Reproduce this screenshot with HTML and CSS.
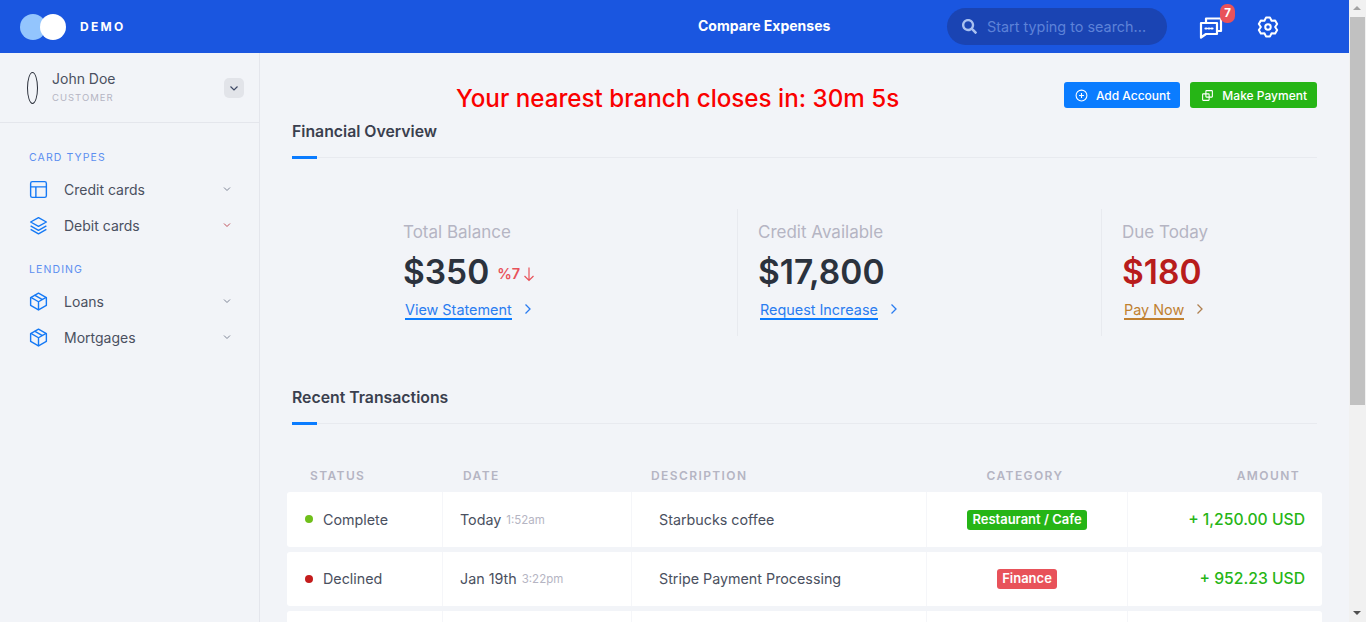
FILE: index.html
```html
<!DOCTYPE html>
<html>
<head>
  <meta charset="UTF-8">
  <meta name="viewport" content="width=device-width,initial-scale=1.0">
  <title>Compare Expenses</title>
  <link rel="stylesheet" href="styles.css">
</head>
<body>
  <header class="topbar">
    <div class="brand">
      <span class="brand-dot brand-dot-light"></span>
      <span class="brand-dot brand-dot-white"></span>
      <span class="brand-name">DEMO</span>
    </div>
    <div class="topbar-title">Compare Expenses</div>
    <div class="search">
      <svg class="search-icon" viewBox="0 0 512 512"><path fill="currentColor" d="M505 442.700 405.300 343c-4.500-4.500-10.600-7-17-7H372c27.600-35.300 44-79.700 44-128C416 93.100 322.900 0 208 0S0 93.100 0 208s93.100 208 208 208c48.300 0 92.700-16.400 128-44v16.300c0 6.400 2.500 12.500 7 17l99.700 99.700c9.400 9.400 24.600 9.400 33.900 0l28.300-28.300c9.400-9.400 9.400-24.600.1-34zM208 336c-70.700 0-128-57.200-128-128 0-70.700 57.200-128 128-128 70.700 0 128 57.200 128 128 0 70.700-57.200 128-128 128z"/></svg>
      <span class="search-text">Start typing to search...</span>
    </div>
    <div class="chat">
      <svg viewBox="0 0 24 24" fill="none" stroke="currentColor" stroke-width="2.200" stroke-linejoin="round"><path d="M7 7V3.500h15V16h-3"/><path d="M2 8h16v11H7l-5 3.500z"/><path d="M6.500 13.500h1M9.500 13.500h1M12.500 13.500h1" stroke-linecap="round"/></svg>
      <span class="chat-badge">7</span>
    </div>
    <svg class="gear" viewBox="0 0 24 24" fill="none" stroke="currentColor" stroke-width="2.200" stroke-linejoin="round"><circle cx="12" cy="12" r="3"/><path d="M9.820 1.730H14.180L15.900 5.250 19.800 4.970 21.990 8.760 19.800 12 21.990 15.240 19.800 19.030 15.900 18.750 14.180 22.270H9.820L8.100 18.750 4.200 19.030 2.010 15.240 4.200 12 2.010 8.760 4.200 4.970 8.100 5.250z"/></svg>
  </header>

  <div class="layout">
    <aside class="sidebar">
      <div class="user">
        <span class="avatar"></span>
        <div class="user-info">
          <div class="user-name">John Doe</div>
          <div class="user-role">CUSTOMER</div>
        </div>
        <span class="user-toggle"><svg viewBox="0 0 12 12"><path d="M2.500 4.500 6 8l3.500-3.500"/></svg></span>
      </div>

      <div class="nav-label">CARD TYPES</div>
      <a class="nav-item">
        <svg class="nav-icon" viewBox="0 0 24 24"><rect x="3" y="3" width="18" height="18" rx="2"/><path d="M3 9h18M9 21V9"/></svg>
        <span class="nav-text">Credit cards</span>
        <svg class="nav-arrow" viewBox="0 0 12 12"><path d="M3 4.500 6 7.500l3-3"/></svg>
      </a>
      <a class="nav-item">
        <svg class="nav-icon" viewBox="0 0 24 24"><path d="M12 3 3 8l9 5 9-5z"/><path d="m3 12.500 9 5 9-5"/><path d="m3 16.500 9 5 9-5"/></svg>
        <span class="nav-text">Debit cards</span>
        <svg class="nav-arrow nav-arrow-red" viewBox="0 0 12 12"><path d="M3 4.500 6 7.500l3-3"/></svg>
      </a>

      <div class="nav-label nav-label-next">LENDING</div>
      <a class="nav-item">
        <svg class="nav-icon" viewBox="0 0 24 24"><path d="M21 16.500V7.500L12 2.500 3 7.500v9l9 5z"/><path d="M3.300 7.300 12 12.300l8.700-5M12 22V12.300M7.500 4.800l9 5.100"/></svg>
        <span class="nav-text">Loans</span>
        <svg class="nav-arrow" viewBox="0 0 12 12"><path d="M3 4.500 6 7.500l3-3"/></svg>
      </a>
      <a class="nav-item">
        <svg class="nav-icon" viewBox="0 0 24 24"><path d="M21 16.500V7.500L12 2.500 3 7.500v9l9 5z"/><path d="M3.300 7.300 12 12.300l8.700-5M12 22V12.300M7.500 4.800l9 5.100"/></svg>
        <span class="nav-text">Mortgages</span>
        <svg class="nav-arrow" viewBox="0 0 12 12"><path d="M3 4.500 6 7.500l3-3"/></svg>
      </a>
    </aside>

    <main class="content">
      <div class="top-row">
        <div class="branch-notice">Your nearest branch closes in: 30m 5s</div>
        <div class="top-actions">
          <a class="btn btn-blue">
            <svg viewBox="0 0 24 24"><circle cx="12" cy="12" r="10"/><path d="M12 7.500v9M7.500 12h9"/></svg>
            Add Account
          </a>
          <a class="btn btn-green">
            <svg viewBox="0 0 24 24"><rect x="9" y="3" width="12" height="12" rx="1"/><rect x="3" y="9" width="12" height="12" rx="1"/></svg>
            Make Payment
          </a>
        </div>
      </div>

      <div class="section-head section-head-first"><h2>Financial Overview</h2></div>

      <div class="stats">
        <div class="stat stat-first">
          <div class="stat-label">Total Balance</div>
          <div class="stat-value">$350<span class="stat-change">%7<svg viewBox="0 0 12 16"><path d="M6 1.500v13M1.500 10 6 14.500 10.500 10"/></svg></span></div>
          <a class="stat-link">View Statement</a><svg class="stat-arrow" viewBox="0 0 10 12"><path d="M2.500 1.500 7 6l-4.500 4.500"/></svg>
        </div>
        <div class="stat">
          <div class="stat-label">Credit Available</div>
          <div class="stat-value">$17,800</div>
          <a class="stat-link">Request Increase</a><svg class="stat-arrow" viewBox="0 0 10 12"><path d="M2.500 1.500 7 6l-4.500 4.500"/></svg>
        </div>
        <div class="stat stat-due">
          <div class="stat-label">Due Today</div>
          <div class="stat-value">$180</div>
          <a class="stat-link">Pay Now</a><svg class="stat-arrow" viewBox="0 0 10 12"><path d="M2.500 1.500 7 6l-4.500 4.500"/></svg>
        </div>
      </div>

      <div class="section-head"><h2>Recent Transactions</h2></div>

      <div class="table-head">
        <div class="col-status">STATUS</div>
        <div class="col-date">DATE</div>
        <div class="col-desc">DESCRIPTION</div>
        <div class="col-cat">CATEGORY</div>
        <div class="col-amount">AMOUNT</div>
      </div>

      <div class="tx-row">
        <div class="col-status"><span class="dot dot-green"></span>Complete</div>
        <div class="col-date">Today <small>1:52am</small></div>
        <div class="col-desc">Starbucks coffee</div>
        <div class="col-cat"><span class="tag tag-green">Restaurant / Cafe</span></div>
        <div class="col-amount">+ 1,250.00 USD</div>
      </div>
      <div class="tx-row">
        <div class="col-status"><span class="dot dot-red"></span>Declined</div>
        <div class="col-date">Jan 19th <small>3:22pm</small></div>
        <div class="col-desc">Stripe Payment Processing</div>
        <div class="col-cat"><span class="tag tag-red">Finance</span></div>
        <div class="col-amount">+ 952.23 USD</div>
      </div>
      <div class="tx-row">
        <div class="col-status"></div>
        <div class="col-date"></div>
        <div class="col-desc"></div>
        <div class="col-cat"></div>
        <div class="col-amount"></div>
      </div>
    </main>
  </div>

  <!-- scrollbar of the window -->
  <div class="fake-scrollbar">
    <span class="sb-arrow sb-arrow-up"></span>
    <span class="sb-thumb"></span>
    <span class="sb-arrow sb-arrow-down"></span>
  </div>
</body>
</html>
```

FILE: styles.css
```css
* {
  box-sizing: border-box;
}

html, body {
  margin: 0;
  height: 622px;
  overflow: hidden;
}

body {
  font-family: Inter, "Noto Sans", Arial, sans-serif;
  background: #f2f4f8;
  color: #3f4254;
  width: 1349px;
}

/* top bar */
.topbar {
  height: 53px;
  background: #1a56e0;
  display: flex;
  align-items: center;
  color: #fff;
}

.brand {
  display: flex;
  align-items: center;
  margin-left: 20px;
  flex: none;
  width: 678px;
}

.brand-dot {
  width: 26px;
  height: 26px;
  border-radius: 50%;
}

.brand-dot-light {
  background: #93c5fd;
}

.brand-dot-white {
  background: #fff;
  margin-left: -6px;
}

.brand-name {
  margin-left: 14px;
  font-size: 12px;
  font-weight: 700;
  letter-spacing: 2.3px;
}

.topbar-title {
  width: 249px;
  margin-top: -2px;
  font-size: 14px;
  font-weight: 700;
  white-space: nowrap;
}

.search {
  width: 220px;
  height: 37px;
  background: #1a44b3;
  border-radius: 19px;
  display: flex;
  align-items: center;
  padding-left: 15px;
}

.search-icon {
  width: 15px;
  height: 15px;
  color: #a9c1f0;
}

.search-text {
  margin-left: 10px;
  font-size: 14.400px;
  color: #5d82d8;
  white-space: nowrap;
}

.chat {
  position: relative;
  width: 24px;
  height: 24px;
  margin-left: 32px;
}

.chat svg {
  display: block;
  width: 24px;
  height: 24px;
}

.chat-badge {
  position: absolute;
  top: -11px;
  left: 21px;
  width: 15px;
  height: 19px;
  background: #e8525a;
  border-radius: 7px;
  font-size: 11.500px;
  font-weight: 700;
  text-align: center;
  line-height: 18px;
}

.gear {
  width: 22px;
  height: 22px;
  margin-left: 34px;
}

.layout {
  display: flex;
}

/* sidebar */
.sidebar {
  width: 260px;
  height: 569px;
  flex: none;
  border-right: 1px solid #e4e6ec;
}

.user {
  height: 70px;
  display: flex;
  align-items: center;
  padding: 0 15px 0 27px;
  border-bottom: 1px solid #e4e6ec;
}

.avatar {
  width: 11px;
  height: 32px;
  border: 1px solid #2a2f3a;
  border-radius: 50%;
  margin-top: 1px;
  flex: none;
}

.user-info {
  margin-left: 14px;
  margin-top: -2px;
  flex: 1;
}

.user-name {
  font-size: 14px;
  line-height: 18px;
  color: #4a5060;
}

.user-role {
  font-size: 9.500px;
  line-height: 13px;
  margin-top: 3px;
  letter-spacing: 1px;
  color: #b5b5c3;
}

.user-toggle {
  width: 20px;
  height: 20px;
  border-radius: 5px;
  background: #e2e4e9;
  display: flex;
  align-items: center;
  justify-content: center;
}

.user-toggle svg {
  width: 12px;
  height: 12px;
  fill: none;
  stroke: #3f4a66;
  stroke-width: 1.200;
}

.nav-label {
  margin: 28px 0 0 29px;
  font-size: 10.500px;
  line-height: 14px;
  letter-spacing: 1.100px;
  color: #5c8ff0;
}

.nav-label-next {
  margin-top: 20px;
}

.nav-item {
  height: 36px;
  display: flex;
  align-items: center;
  padding-left: 28px;
}

.nav-label + .nav-item {
  margin-top: 6px;
}

.nav-icon {
  width: 21px;
  height: 21px;
  fill: none;
  stroke: #1579f5;
  stroke-width: 1.600;
  stroke-linejoin: round;
  flex: none;
}

.nav-text {
  margin-left: 15px;
  width: 154px;
  font-size: 14px;
  color: #4a5060;
}

.nav-arrow {
  width: 12px;
  height: 12px;
  margin-left: 3px;
  fill: none;
  stroke: #7e8596;
  stroke-width: 1;
}

.nav-arrow-red {
  stroke: #c0505a;
}

/* main column */
.content {
  flex: 1;
  padding: 0 32px;
}

.top-row {
  display: flex;
  height: 55px;
  padding-top: 29px;
}

.branch-notice {
  margin-left: 164px;
  font-size: 24.200px;
  line-height: 34px;
  font-weight: 500;
  color: #fa0000;
  white-space: nowrap;
}

.top-actions {
  margin-left: auto;
  display: flex;
  gap: 10px;
}

.btn {
  height: 26px;
  display: flex;
  align-items: center;
  padding: 0 10px 0 11px;
  border-radius: 3px;
  font-size: 12px;
  font-weight: 500;
  color: #fff;
  white-space: nowrap;
}

.btn svg {
  width: 13px;
  height: 13px;
  margin-right: 8px;
  fill: none;
  stroke: #fff;
  stroke-width: 2;
}

.btn-blue {
  background: #0a7cff;
}

.btn-green {
  background: #26b516;
}

.section-head {
  position: relative;
  height: 49px;
  border-bottom: 1px solid #e8eaef;
  padding-top: 13px;
}

.section-head-first {
  height: 50px;
  padding-top: 14px;
}

.section-head h2 {
  margin: 0;
  font-size: 15.800px;
  line-height: 20px;
  font-weight: 600;
  color: #3a3f4e;
}

.section-head::after {
  content: "";
  position: absolute;
  left: 0;
  bottom: -2px;
  width: 25px;
  height: 3px;
  background: #0a7cff;
}

/* balance blocks */
.stats {
  display: grid;
  grid-template-columns: 445px 364px 216px;
  margin-top: 51px;
  height: 127px;
  margin-bottom: 39px;
}

.stat {
  border-left: 1px solid #e8eaef;
  padding: 13px 0 0 20px;
}

.stat-first {
  border-left: none;
  padding-left: 111px;
}

.stat-label {
  font-size: 17px;
  line-height: 20px;
  color: #b5b5c3;
}

.stat-value {
  display: flex;
  align-items: center;
  height: 44px;
  margin-top: 8px;
  font-size: 33.500px;
  font-weight: 600;
  color: #2b323d;
  white-space: nowrap;
}

.stat-change {
  display: flex;
  align-items: center;
  margin-left: 8px;
  margin-top: 3px;
  font-size: 14.500px;
  font-weight: 600;
  color: #e8525a;
}

.stat-change svg {
  width: 12px;
  height: 16px;
  margin-left: 3px;
  fill: none;
  stroke: #e8525a;
  stroke-width: 1.200;
}

.stat-link {
  display: inline-block;
  margin: 7px 0 0 2px;
  font-size: 14.400px;
  line-height: 17px;
  color: #2a7cf0;
  border-bottom: 2px solid #0a7cff;
}

.stat-arrow {
  width: 10px;
  height: 12px;
  margin-left: 11px;
  fill: none;
  stroke: #2a7cf0;
  stroke-width: 1.300;
}

.stat-due .stat-value {
  color: #b81c1c;
}

.stat-due .stat-link {
  color: #c08030;
  border-bottom-color: #c08030;
}

.stat-due .stat-arrow {
  stroke: #b08050;
}

/* transactions */
.table-head,
.tx-row {
  display: grid;
  grid-template-columns: 155px 189px 295px 201px 195px;
  margin: 0 -5px;
}

.table-head {
  height: 68px;
  padding-top: 44px;
  font-size: 12px;
  line-height: 15px;
  font-weight: 600;
  letter-spacing: 1.400px;
  color: #b5b5c3;
}

.table-head .col-status {
  padding-left: 23px;
}

.table-head .col-date {
  padding-left: 21px;
}

.table-head .col-desc {
  padding-left: 20px;
}

.table-head .col-cat {
  padding-right: 3px;
  text-align: center;
}

.table-head .col-amount {
  text-align: right;
  padding-right: 22px;
}

.tx-row {
  height: 54.500px;
  margin-top: 5px;
  background: #fff;
  border-radius: 3px;
  font-size: 14.300px;
  color: #4a5060;
}

.table-head + .tx-row {
  margin-top: 0;
}

.tx-row > div {
  display: flex;
  align-items: center;
  border-left: 1px solid #f5f6f9;
}

.tx-row > div:first-child {
  border-left: none;
}

.tx-row .col-status {
  padding-left: 18px;
}

.tx-row .col-date {
  padding-left: 17px;
  white-space: pre;
}

.tx-row small {
  font-size: 11.500px;
  color: #b5b5c3;
  margin: 1px 0 0 1px;
}

.tx-row .col-desc {
  padding-left: 27px;
}

.tx-row .col-cat {
  justify-content: center;
}

.tx-row .col-amount {
  justify-content: flex-end;
  padding-right: 17px;
  font-size: 15.700px;
  font-weight: 500;
  color: #26b516;
}

.dot {
  width: 8px;
  height: 8px;
  border-radius: 50%;
  margin-right: 10px;
}

.dot-green {
  background: #6fbf1a;
}

.dot-red {
  background: #c41c1c;
}

.tag {
  padding: 0 5px;
  height: 20px;
  margin-top: 1px;
  line-height: 19px;
  border-radius: 3px;
  font-size: 13px;
  font-weight: 600;
  color: #fff;
}

.tag-green {
  background: #26b516;
}

.tag-red {
  background: #e8525a;
}

/* drawn scrollbar, it sits over the window edge */
.fake-scrollbar {
  position: fixed;
  top: 0;
  right: 0;
  width: 17px;
  height: 622px;
  background: #f1f1f1;
  display: flex;
  flex-direction: column;
  align-items: center;
}

.sb-arrow {
  flex: none;
  height: 17px;
  width: 17px;
  position: relative;
}

.sb-arrow::after {
  content: "";
  position: absolute;
  left: 4px;
  top: 6px;
  border-left: 4px solid transparent;
  border-right: 4px solid transparent;
}

.sb-arrow-up::after {
  border-bottom: 4px solid #a3a3a3;
}

.sb-arrow-down {
  margin-top: auto;
}

.sb-arrow-down::after {
  border-top: 4px solid #505050;
}

.sb-thumb {
  width: 15px;
  height: 388px;
  background: #c1c1c1;
}
```
